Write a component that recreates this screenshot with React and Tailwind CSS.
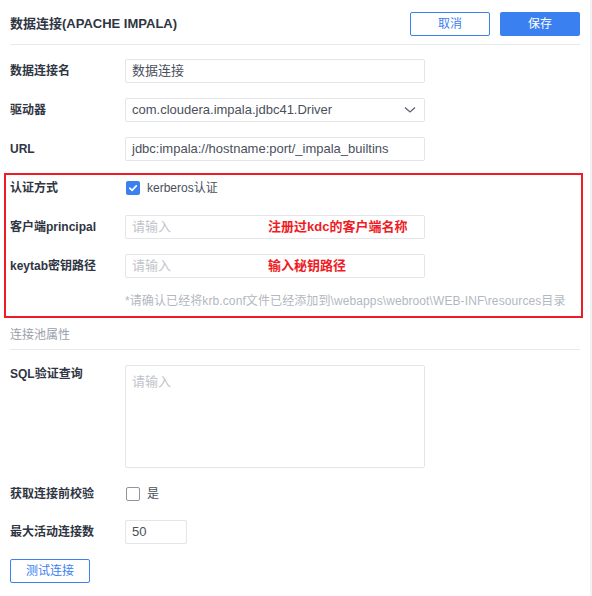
import React from "react";

const font = { fontFamily: '"Liberation Sans", "Noto Sans CJK SC", sans-serif' };

const Row = ({ label, children, top, gap = "mt-[15px]" }) => (
  <div className={`flex ${top ? "items-start" : "items-center"} ${gap}`}>
    <div className={`w-[115px] shrink-0 text-[12px] font-bold text-[#2f3542] ${top ? "leading-[18px]" : ""}`}>
      {label}
    </div>
    {children}
  </div>
);

const Input = ({ value, placeholder, width = "w-[300px]", children }) => (
  <div
    className={`${width} h-[24px] border border-[#e3e5e9] rounded-[2px] px-[6px] flex items-center text-[13px] bg-white`}
  >
    {value ? (
      <span className="text-[#4a505c]">{value}</span>
    ) : (
      <span className="text-[#bfc3ca] w-[136px] shrink-0">{placeholder}</span>
    )}
    {children}
  </div>
);

const Check = ({ checked, label }) => (
  <div className="flex items-center gap-[7px] pl-[1px]">
    {checked ? (
      <div className="w-[14px] h-[14px] rounded-[2px] bg-[#3b80f0] flex items-center justify-center">
        <svg width="10" height="10" viewBox="0 0 10 10">
          <path d="M1.8 5.2 L4.1 7.3 L8.3 2.8" stroke="white" strokeWidth="1.7" fill="none" strokeLinecap="round" strokeLinejoin="round" />
        </svg>
      </div>
    ) : (
      <div className="w-[14px] h-[14px] rounded-[2px] border border-[#8e95a0] bg-white" />
    )}
    <span className="text-[12px] text-[#4a505c]">{label}</span>
  </div>
);

export default function App() {
  return (
    <div className="flex w-[592px] h-[596px] bg-white" style={font}>
      <div className="w-[590px] px-[10px]">
        <div className="flex items-center justify-between pt-[12px] pb-[8px] border-b border-[#e8e9ec]">
          <div className="text-[13px] font-bold text-[#2f3542]">数据连接(APACHE IMPALA)</div>
          <div className="flex gap-[10px]">
            <button className="w-[80px] h-[24px] border border-[#3b80f0] rounded-[2px] text-[12px] text-[#3b80f0] bg-white">
              取消
            </button>
            <button className="w-[80px] h-[24px] rounded-[2px] text-[12px] text-white bg-[#3b80f0]">
              保存
            </button>
          </div>
        </div>

        <Row label="数据连接名" gap="mt-[14px]">
          <Input value="数据连接" />
        </Row>
        <Row label="驱动器">
          <div className="w-[300px] h-[24px] border border-[#e3e5e9] rounded-[2px] pl-[6px] pr-[8px] flex items-center justify-between text-[13px] text-[#4a505c]">
            <span>com.cloudera.impala.jdbc41.Driver</span>
            <svg width="12" height="8" viewBox="0 0 12 8">
              <path d="M1 1.5 L6 6 L11 1.5" stroke="#5b6270" strokeWidth="1.3" fill="none" />
            </svg>
          </div>
        </Row>
        <Row label="URL">
          <Input value="jdbc:impala://hostname:port/_impala_builtins" />
        </Row>

        <div className="relative">
          <div className="absolute top-[-3px] left-[-6px] right-[-3px] bottom-[-9px] border-2 border-[#ee1c25] pointer-events-none" />
          <Row label="认证方式">
            <div className="h-[24px] flex items-center">
              <Check checked label="kerberos认证" />
            </div>
          </Row>
          <Row label="客户端principal">
            <Input placeholder="请输入">
              <span className="text-[13px] font-bold text-[#ee1c25]">注册过kdc的客户端名称</span>
            </Input>
          </Row>
          <Row label="keytab密钥路径">
            <Input placeholder="请输入">
              <span className="text-[13px] font-bold text-[#ee1c25]">输入秘钥路径</span>
            </Input>
          </Row>
          <div className="pl-[115px] mt-[15px] text-[12px] leading-[16px] text-[#b3b8c0] whitespace-nowrap tracking-[0.1px]">
            *请确认已经将krb.conf文件已经添加到\webapps\webroot\WEB-INF\resources目录
          </div>
        </div>

        <div className="mt-[16px] pb-[4px] border-b border-[#e8e9ec] text-[12px] leading-[20px] text-[#9aa0a9]">
          连接池属性
        </div>

        <Row label="SQL验证查询" top>
          <div className="w-[300px] h-[103px] border border-[#e3e5e9] rounded-[2px] px-[6px] pt-[6px] text-[13px] text-[#bfc3ca]">
            请输入
          </div>
        </Row>
        <Row label="获取连接前校验" gap="mt-[14px]">
          <div className="h-[24px] flex items-center">
            <Check label="是" />
          </div>
        </Row>
        <Row label="最大活动连接数" gap="mt-[14px]">
          <Input value="50" width="w-[62px]" />
        </Row>
        <div className="mt-[14px]">
          <button className="w-[80px] h-[24px] border border-[#3b80f0] rounded-[2px] text-[12px] text-[#3b80f0] bg-white">
            测试连接
          </button>
        </div>
      </div>
      <div className="w-[2px] h-full bg-[#f1f2f4]" />
    </div>
  );
}
